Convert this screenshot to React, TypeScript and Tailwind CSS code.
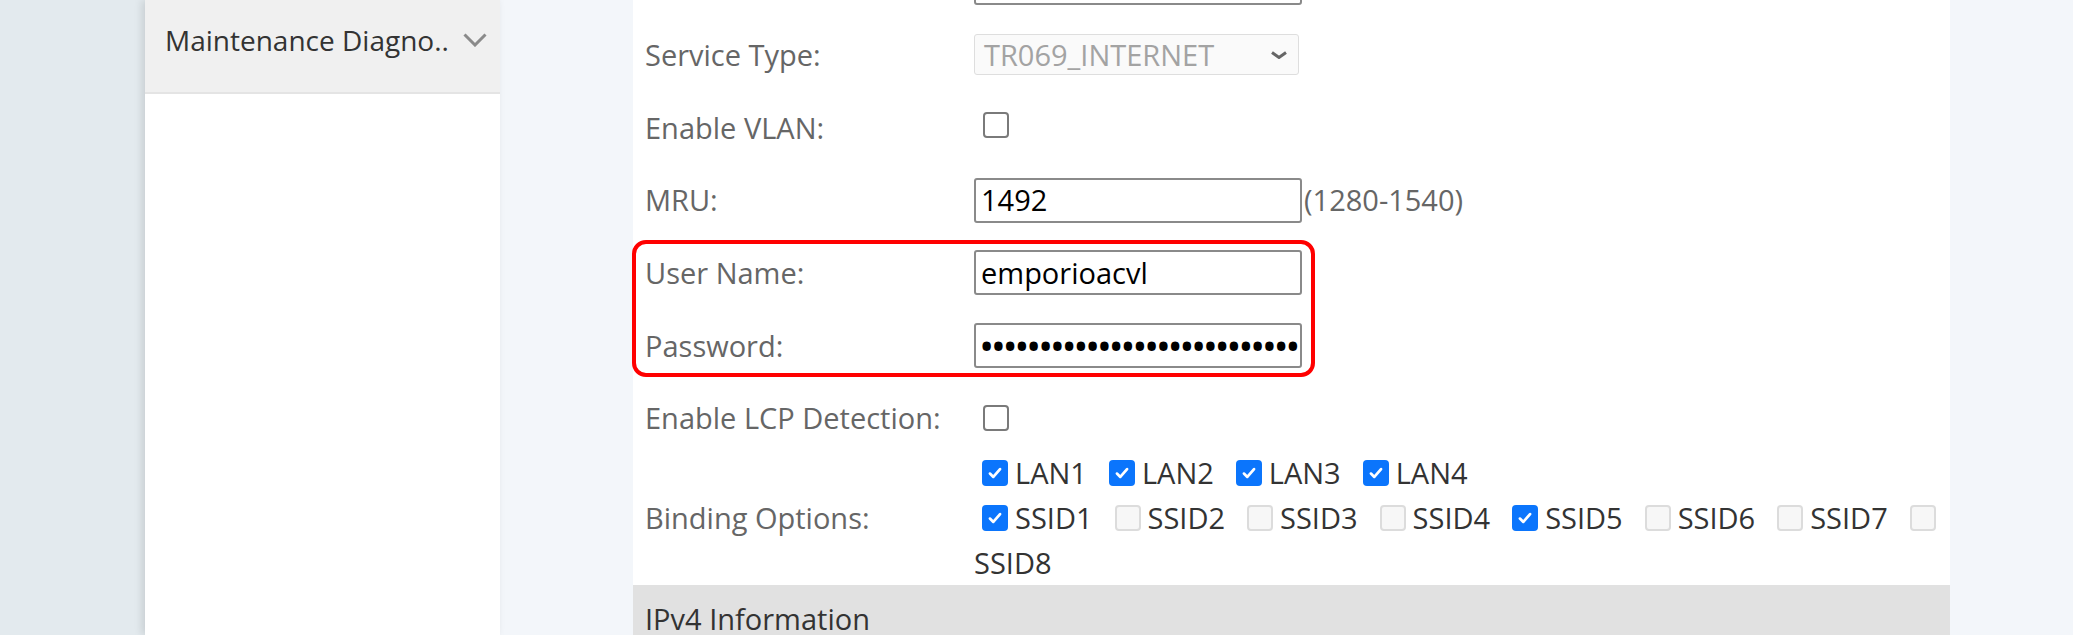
import { ReactNode } from "react";

type BoxState = "on" | "off" | "disabled";

function Box({ state }: { state: BoxState }) {
  if (state === "on") {
    return (
      <span className="flex h-[26px] w-[26px] shrink-0 items-center justify-center rounded-[4px] bg-[#0b75fc]">
        <svg viewBox="0 0 16 16" className="h-[18px] w-[18px]" fill="none">
          <path d="M3.5 8.5l3 3 6-7" stroke="white" strokeWidth="2.4" strokeLinecap="round" strokeLinejoin="round" />
        </svg>
      </span>
    );
  }
  if (state === "disabled") {
    return <span className="block h-[26px] w-[26px] shrink-0 rounded-[4px] border-2 border-[#dcdcdc] bg-[#f7f7f7]" />;
  }
  return <span className="block h-[26px] w-[26px] shrink-0 rounded-[4px] border-2 border-[#7a7a7a] bg-white" />;
}

function Opt({ label, state }: { label: string; state: BoxState }) {
  return (
    <span className="mr-[22px] flex items-center gap-[7px]">
      <Box state={state} />
      <span>{label}</span>
    </span>
  );
}

function Row({ label, children }: { label?: string; children?: ReactNode }) {
  return (
    <div className="flex h-[72.6px] items-center">
      <div className="w-[341px] shrink-0 pl-[12px] text-[#666]">{label}</div>
      <div className="flex items-center">{children}</div>
    </div>
  );
}

function TextBox({ children }: { children?: ReactNode }) {
  return (
    <div className="flex h-[45px] w-[328px] items-center overflow-hidden whitespace-nowrap rounded-[3px] border-2 border-[#8a8a8a] bg-white px-[5px] text-black">
      {children}
    </div>
  );
}

const lans = ["LAN1", "LAN2", "LAN3", "LAN4"];
const ssids: [string, BoxState][] = [
  ["SSID1", "on"],
  ["SSID2", "disabled"],
  ["SSID3", "disabled"],
  ["SSID4", "disabled"],
  ["SSID5", "on"],
  ["SSID6", "disabled"],
  ["SSID7", "disabled"],
];

export default function App() {
  return (
    <div className="flex h-[635px] w-[2073px] overflow-hidden bg-[#f3f6fa] font-['Open_Sans',sans-serif] text-[29px]">
      <div className="w-[145px] shrink-0 bg-[#e3eaee]" />

      <aside className="w-[355px] shrink-0 bg-white shadow-[-3px_0_8px_rgba(0,0,0,0.12)]">
        <div className="flex h-[94px] items-center justify-between border-b-2 border-[#e4e4e4] bg-[#f0f0f0] pb-[12px] pl-[20px] pr-[13px] text-[28px] text-[#333]">
          <span>Maintenance Diagno..</span>
          <svg viewBox="0 0 24 14" className="h-[14px] w-[24px]" fill="none">
            <path d="M1.5 1.5L12 12L22.5 1.5" stroke="#8a8a8a" strokeWidth="3" />
          </svg>
        </div>
      </aside>

      <div className="w-[133px] shrink-0" />

      <main className="w-[1317px] shrink-0 bg-white">
        <div className="-mt-[54px]">
          <Row>
            <TextBox />
          </Row>

          <Row label="Service Type:">
            <div className="flex h-[41px] w-[325px] items-center justify-between rounded-[3px] border border-[#dedede] bg-[#fafafa] pl-[9px] pr-[10px] text-[#a3a3a3]">
              <span>TR069_INTERNET</span>
              <svg viewBox="0 0 18 8" className="h-[8px] w-[18px]" fill="none">
                <path d="M2 1.5L9 6.5L16 1.5" stroke="#666" strokeWidth="3" />
              </svg>
            </div>
          </Row>

          <Row label="Enable VLAN:">
            <span className="ml-[9px] -mt-[4px]">
              <Box state="off" />
            </span>
          </Row>

          <Row label="MRU:">
            <TextBox>1492</TextBox>
            <span className="ml-[2px] text-[#666]">(1280-1540)</span>
          </Row>

          <div className="relative">
            <Row label="User Name:">
              <TextBox>emporioacvl</TextBox>
            </Row>
            <Row label="Password:">
              <TextBox>
                <span className="text-[30px] font-bold tracking-[0.5px]">{"•".repeat(30)}</span>
              </TextBox>
            </Row>
            <div className="absolute -left-[1px] top-[4px] h-[137px] w-[683px] rounded-[14px] border-4 border-[#ff0000]" />
          </div>

          <Row label="Enable LCP Detection:">
            <span className="ml-[9px]">
              <Box state="off" />
            </span>
          </Row>

          <div className="-mt-[4px] flex">
            <div className="flex w-[341px] shrink-0 items-center pl-[12px] text-[#666]">Binding Options:</div>
            <div className="text-[#333]">
              <div className="flex h-[45px] items-center pl-[8px]">
                {lans.map((l) => (
                  <Opt key={l} label={l} state="on" />
                ))}
              </div>
              <div className="flex h-[45px] items-center pl-[8px]">
                {ssids.map(([l, s]) => (
                  <Opt key={l} label={l} state={s} />
                ))}
                <Box state="disabled" />
              </div>
              <div className="flex h-[45px] items-center">SSID8</div>
            </div>
          </div>
        </div>

        <div className="h-[60px] bg-[#e1e1e1] pl-[12px] pt-[14px] leading-[40px] text-[#333]">IPv4 Information</div>
      </main>
    </div>
  );
}
